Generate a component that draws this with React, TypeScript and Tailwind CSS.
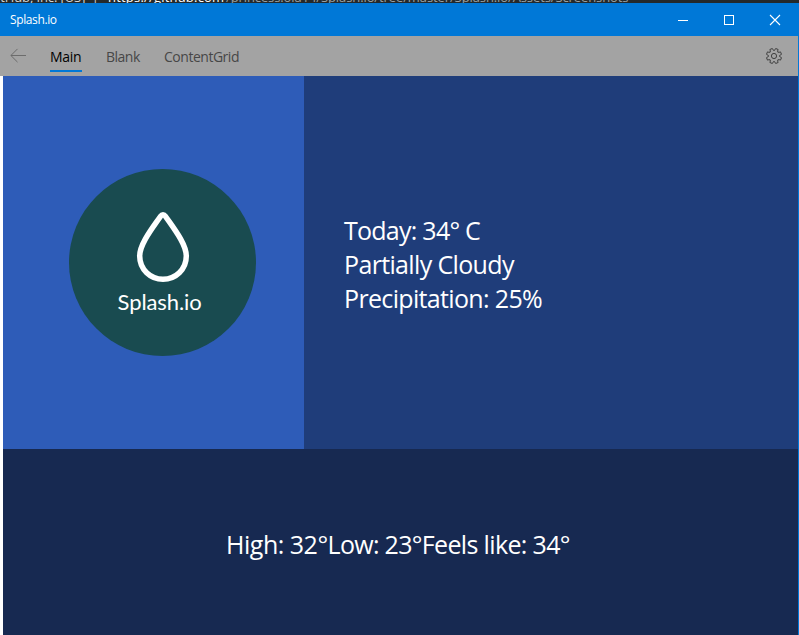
import type { ReactNode } from "react";

const teeth = 8;
function gearPath(c: number, outer: number, inner: number) {
  const pts: string[] = [];
  const at = (a: number, r: number) => {
    const t = ((a - 90) * Math.PI) / 180;
    return (c + r * Math.cos(t)).toFixed(2) + " " + (c + r * Math.sin(t)).toFixed(2);
  };
  for (let i = 0; i < teeth; i++) {
    const a = (i * 360) / teeth + 22.5;
    pts.push((i ? "L" : "M") + at(a - 10, outer));
    pts.push("L" + at(a + 10, outer));
    pts.push("L" + at(a + 13, inner + 0.4));
    pts.push("Q" + at(a + 22.5, inner - 1.3) + " " + at(a + 32, inner + 0.4));
  }
  return pts.join("") + "Z";
}

function Line({ children, className }: { children: ReactNode; className: string }) {
  return <span className={"block w-fit whitespace-pre " + className}>{children}</span>;
}

export default function App() {
  return (
    <div className="flex h-[635px] w-[799px] flex-col overflow-hidden bg-white font-['Open_Sans','Noto_Sans',sans-serif]">
      <div className="flex h-[3px] shrink-0 items-end overflow-hidden bg-[#24292b] text-[13px] leading-[12px] whitespace-pre">
        <span className="-ml-[3px] w-[111px] shrink-0 tracking-[-0.1px] text-[#d5d5d5]">itHub, Inc. [US]  |</span>
        <span className="w-[118px] shrink-0 tracking-[0.2px] text-white">https://github.com</span>
        <span className="tracking-[-0.1px] text-[#9aa0a2]">/princess.ola14/Splash.io/tree/master/Splash.io/Assets/Screenshots</span>
      </div>
      <div className="flex min-h-0 flex-1 flex-col border-r border-[#0078d7]">
        <header className="flex h-[33px] shrink-0 items-center justify-between bg-[#0078d7] pl-[10px] text-white">
          <Line className="text-[12px] tracking-[-0.38px]">Splash.io</Line>
          <div className="flex">
            <svg className="h-[33px] w-[46px]" fill="none" stroke="currentColor" shapeRendering="crispEdges"><path d="M18 17.5h10" /></svg>
            <svg className="h-[33px] w-[46px]" fill="none" stroke="currentColor" shapeRendering="crispEdges"><path d="M18.5 12.5h9v9h-9z" /></svg>
            <svg className="h-[33px] w-[46px]" fill="none" stroke="currentColor"><path d="M18 12l10 10M28 12L18 22" strokeWidth="1.1" /></svg>
          </div>
        </header>
        <nav className="flex h-10 shrink-0 items-center bg-[#a3a3a3] text-[14px] text-[#474747]">
          <svg className="mr-[24px] ml-[10px] h-4 w-4 text-[#6c6c6c]" fill="none" stroke="currentColor"><path d="M16 7.5H1M7.5 .9L.9 7.5l6.6 6.6" /></svg>
          <div className="mr-6 flex h-full w-8 flex-col justify-between border-b-[4px] border-transparent pt-[11px] text-black">
            <Line className="leading-5 tracking-[-0.3px]">Main</Line>
            <span className="h-[2px] w-full bg-[#0078d7]" />
          </div>
          <div className="w-[58px]"><Line className="tracking-[-0.5px]">Blank</Line></div>
          <div><Line className="tracking-[-0.48px]">ContentGrid</Line></div>
          <svg className="mr-4 ml-auto h-4 w-4 text-[#404040]" viewBox="0 0 16 16" fill="none" stroke="currentColor">
            <path d={gearPath(8, 7.7, 5.9)} />
            <circle cx="8" cy="8" r="2.6" />
          </svg>
        </nav>
        <main className="flex min-h-0 flex-1 flex-col pl-[3px] text-[25px] leading-[34px] text-white">
          <div className="flex h-[373px] shrink-0">
            <section className="flex w-[301px] items-center justify-center bg-[#2e5cb8] pt-[0.6px] pl-[18.2px]">
              <div className="flex h-[187px] w-[187px] flex-col items-center rounded-full bg-[#194b50] pt-[42px]">
                <svg className="h-[72px] w-[54px] shrink-0" viewBox="0 0 54 72" fill="none" stroke="white" strokeWidth="5.5">
                  <path d="M27 3.7Q28.4 3.7 29.4 5.2C37.5 17 50.3 33 50.3 45C50.3 58.5 39.5 68.2 27 68.2C14.5 68.2 3.7 58.5 3.7 45C3.7 33 16.5 17 24.6 5.2Q25.6 3.7 27 3.7Z" />
                </svg>
                <Line className="mr-[6px] font-['Lato'] text-[22px] leading-[37px] tracking-[-0.1px]">Splash.io</Line>
              </div>
            </section>
            <section className="flex flex-1 flex-col justify-center bg-[#1f3d7a] pt-[2px] pl-10">
              <Line className="tracking-[-0.75px]">Today: 34° C</Line>
              <Line className="tracking-[-0.65px]">Partially Cloudy</Line>
              <Line className="tracking-[-0.66px]">Precipitation: 25%</Line>
            </section>
          </div>
          <section className="flex flex-1 items-center justify-center bg-[#172951] pt-[4px] pr-[5px]">
            <Line className="tracking-[-0.5px]">High: 32°</Line>
            <Line className="tracking-[-0.7px]">Low: 23°</Line>
            <Line className="tracking-[-0.65px]">Feels like: 34°</Line>
          </section>
        </main>
      </div>
    </div>
  );
}
